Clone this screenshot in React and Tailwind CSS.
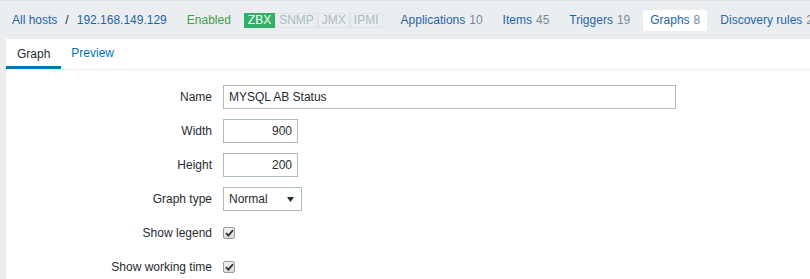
import React from 'react';

const navItems = [
  { label: 'Applications', count: 10 },
  { label: 'Items', count: 45 },
  { label: 'Triggers', count: 19 },
  { label: 'Graphs', count: 8, active: true },
  { label: 'Discovery rules', count: 2 },
];

const Checkbox = () => (
  <span className="inline-flex h-[12px] w-[12px] items-center justify-center rounded-[2px] border border-[#9a9a9a] bg-gradient-to-b from-[#f2f2f2] to-[#dcdcdc]">
    <svg width="9" height="8" viewBox="0 0 9 8">
      <path d="M1 4.2 L3.4 6.6 L8 1.2" fill="none" stroke="#333" strokeWidth="1.8" />
    </svg>
  </span>
);

const Label = ({ children }) => (
  <div className="flex h-[24px] items-center justify-end text-[#1f2c33]">{children}</div>
);

export default function App() {
  return (
    <div
      className="h-[279px] w-[810px] overflow-hidden border-t border-[#dfe4e7] bg-[#ebeef0] text-[12px]"
      style={{ fontFamily: '"Liberation Sans", Arial, sans-serif' }}
    >
      {/* header: breadcrumb, status and host navigation */}
      <div className="flex h-[38px] items-center whitespace-nowrap pl-[12px]">
        <a className="text-[#1f65a6]">All hosts</a>
        <span className="mx-[8px] text-[#1f2c33]">/</span>
        <a className="text-[#1f65a6]">192.168.149.129</a>
        <span className="ml-[20px] text-[#429e47]">Enabled</span>
        <div className="ml-[13px] flex h-[15px] items-stretch leading-[13px]">
          <span className="border border-[#34af67] bg-[#34af67] px-[3px] text-white">ZBX</span>
          <span className="border border-[#dfe4e7] px-[3px] text-[#acbbc2]">SNMP</span>
          <span className="border border-[#dfe4e7] px-[3px] text-[#acbbc2]">JMX</span>
          <span className="border border-[#dfe4e7] px-[3px] text-[#acbbc2]">IPMI</span>
        </div>
        <div className="ml-[11px] flex items-center gap-[6px]">
          {navItems.map((item) => (
            <div
              key={item.label}
              className={
                'flex h-[21px] items-center px-[7px] ' +
                (item.active ? 'rounded-[2px] bg-white' : '')
              }
            >
              <span className="text-[#1f65a6]">{item.label}</span>
              <span className="ml-[4px] text-[#768d99]">{item.count}</span>
            </div>
          ))}
        </div>
      </div>

      {/* white form panel */}
      <div className="ml-[6px] h-[240px] bg-white">
        <div className="flex h-[31px] items-stretch border-b border-[#ebeef0]">
          <div className="flex items-center border-b-[3px] border-[#0275b8] px-[11px] pt-[3px] text-[#1f2c33]">
            Graph
          </div>
          <div className="flex items-center px-[10px] pb-[3px] text-[#0275b8]">Preview</div>
        </div>

        <div className="grid grid-cols-[206px_1fr] gap-x-[11px] gap-y-[10px] pt-[15px]">
          <Label>Name</Label>
          <div>
            <input
              readOnly
              value="MYSQL AB Status"
              className="h-[24px] w-[453px] border border-[#acbbc2] px-[5px] text-[#1f2c33] outline-none"
            />
          </div>

          <Label>Width</Label>
          <div>
            <input
              readOnly
              value="900"
              className="h-[24px] w-[75px] border border-[#acbbc2] px-[5px] text-right text-[#1f2c33] outline-none"
            />
          </div>

          <Label>Height</Label>
          <div>
            <input
              readOnly
              value="200"
              className="h-[24px] w-[75px] border border-[#acbbc2] px-[5px] text-right text-[#1f2c33] outline-none"
            />
          </div>

          <Label>Graph type</Label>
          <div>
            <div className="flex h-[24px] w-[79px] items-center justify-between border border-[#acbbc2] pl-[5px] pr-[7px] text-[#1f2c33]">
              <span>Normal</span>
              <svg width="7" height="5" viewBox="0 0 7 5">
                <path d="M0 0 H7 L3.5 5 Z" fill="#1f2c33" />
              </svg>
            </div>
          </div>

          <Label>Show legend</Label>
          <div className="flex h-[24px] items-center">
            <Checkbox />
          </div>

          <Label>Show working time</Label>
          <div className="flex h-[24px] items-center">
            <Checkbox />
          </div>
        </div>
      </div>
    </div>
  );
}
